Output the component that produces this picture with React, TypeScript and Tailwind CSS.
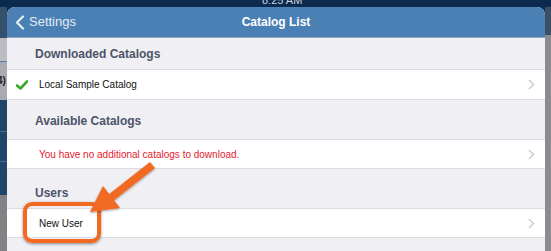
import React from 'react';

const Chevron = () => (
  <svg width="7" height="11" viewBox="0 0 7 11" className="shrink-0">
    <path d="M1 1 L5.5 5.5 L1 10" fill="none" stroke="#c7c7cc" strokeWidth="1.3" />
  </svg>
);

const SectionHeader = ({ title, className }: { title: string; className: string }) => (
  <div className={`flex items-center pl-[28px] text-[12px] font-bold text-[#4c5468] ${className}`}>{title}</div>
);

const Row = ({ children, className = 'h-[30px]' }: { children: React.ReactNode; className?: string }) => (
  <div className={`bg-white border-y border-[#dcdce0] flex items-center pr-[10px] ${className}`}>
    <div className="flex-1 flex items-center">{children}</div>
    <Chevron />
  </div>
);

const App: React.FC = () => {
  return (
    <div className="w-[551px] h-[251px] relative overflow-hidden bg-[#0c2a4e] flex flex-col font-['Liberation_Sans',Arial,sans-serif]">
      {/* Status bar */}
      <div className="h-[7px] relative overflow-hidden">
        <span className="absolute left-[262px] -top-[8px] text-[11px] text-[#c9d3df]">8:25 AM</span>
      </div>

      <div className="flex-1 flex">
        {/* Dimmed app behind */}
        <div className="w-[7px] flex flex-col">
          <div className="h-[31px] bg-[#34506d]" />
          <div className="h-[24px] bg-[#b9bcc2] border-b border-[#4f7fb3]" />
          <div className="h-[38px] bg-[#a9abb0] text-[10px] font-bold text-[#222] leading-[38px] -ml-[3px]">4)</div>
          <div className="h-[32px] bg-[#1f4668] border-b border-[#4a6d8e]" />
          <div className="h-[30px] bg-[#1f4668] border-b border-[#4a6d8e]" />
          <div className="h-[33px] bg-[#1f4668]" />
          <div className="flex-1 bg-[#828286]" />
        </div>

        {/* Modal */}
        <div className="flex-1 rounded-t-[8px] overflow-hidden bg-[#efeff4] flex flex-col">
          <div className="h-[31px] bg-[#4b80b4] border-b border-[#8fa6bf] relative flex items-center justify-center">
            <div className="absolute left-[8px] top-0 h-full flex items-center gap-[4px] text-[13px] text-[#e3ecf5]">
              <svg width="10" height="15" viewBox="0 0 10 15">
                <path d="M8 1.5 L2 7.5 L8 13.5" fill="none" stroke="#e3ecf5" strokeWidth="2.2" strokeLinecap="round" strokeLinejoin="round" />
              </svg>
              Settings
            </div>
            <span className="text-[12px] font-bold text-white">Catalog List</span>
          </div>

          <SectionHeader title="Downloaded Catalogs" className="h-[31px]" />
          <Row className="h-[31px]">
            <svg width="12" height="10" viewBox="0 0 12 10" className="ml-[9px] mr-[11px]">
              <path d="M1 5.5 L4.5 8.5 L11 1.5" fill="none" stroke="#3aa82a" strokeWidth="2.6" strokeLinecap="round" strokeLinejoin="round" />
            </svg>
            <span className="text-[10px] text-[#111]">Local Sample Catalog</span>
          </Row>

          <SectionHeader title="Available Catalogs" className="h-[39px] pt-[2px]" />
          <Row>
            <span className="ml-[32px] text-[10px] text-[#e3212d]">You have no additional catalogs to download.</span>
          </Row>

          <SectionHeader title="Users" className="h-[39px] pt-[8px]" />
          <Row>
            <span className="ml-[32px] text-[10px] text-[#111]">New User</span>
          </Row>
          <div className="flex-1" />
        </div>

        <div className="w-[6px] flex flex-col">
          <div className="h-[28px] bg-[#3b4e63]" />
          <div className="flex-1 bg-[#8b8b90]" />
        </div>
      </div>

      {/* Annotation */}
      <div className="absolute left-[23px] top-[202px] w-[78px] h-[41px] border-[4px] border-[#f26a21] rounded-[9px] shadow-[0_1px_3px_rgba(0,0,0,0.45)]" />
      <svg className="absolute left-0 top-0" width="551" height="251" viewBox="0 0 551 251">
        <defs>
          <filter id="sh" x="-20%" y="-20%" width="140%" height="140%">
            <feDropShadow dx="0" dy="1" stdDeviation="1.2" floodColor="#000" floodOpacity="0.4" />
          </filter>
        </defs>
        <g filter="url(#sh)" fill="#f26a21">
          <path d="M150 162 L155 168 L113 201 L108 195 Z" />
          <path d="M90 212 L103 186 L120 208 Z" />
        </g>
      </svg>
    </div>
  );
};

export default App;
